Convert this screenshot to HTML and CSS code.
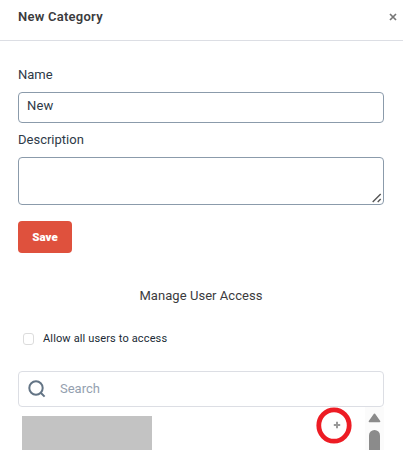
FILE: index.html
```html
<!DOCTYPE html>
<html lang="en">
<head>
<meta charset="utf-8">
<title>New Category</title>
<link rel="stylesheet" href="styles.css">
</head>
<body>
<header class="header">
  <h1 class="title"><span>New Category</span></h1>
  <svg class="close" width="8" height="8" viewBox="0 0 8 8"><path d="M1 1L7 7M7 1L1 7"/></svg>
</header>
<main class="content">
  <label class="label name-label" for="name">Name</label>
  <input class="field" id="name" type="text" value="New">
  <label class="label desc-label" for="desc">Description</label>
  <div class="area-wrap">
    <textarea class="area" id="desc"></textarea>
    <svg class="grip" width="10" height="10" viewBox="0 0 10 10"><path d="M.7 9L8.7 1M5.7 9L8.7 6"/></svg>
  </div>
  <button class="save">Save</button>
  <h2 class="subtitle">Manage User Access</h2>
  <label class="check"><input class="box" type="checkbox"><span>Allow all users to access</span></label>
  <div class="search">
    <svg width="18" height="18" viewBox="0 0 18 18"><circle cx="8" cy="8" r="6.7"/><path d="M12.7 12.7L16.6 16.6"/></svg>
    <span>Search</span>
  </div>
  <div class="list">
    <div class="user"></div>
    <div class="add">
      <svg class="plus" width="8" height="8" viewBox="0 0 8 8"><path d="M4 .8V7.2M.8 4H7.2"/></svg>
      <svg class="ring" width="36" height="38" viewBox="0 0 36 38"><ellipse cx="18" cy="18.5" rx="15.2" ry="15.7"/></svg>
    </div>
    <div class="track">
      <svg width="13" height="10" viewBox="0 0 13 10"><path d="M6.5 1.3L11.6 8.5H1.4Z"/></svg>
      <div class="thumb"></div>
    </div>
  </div>
</main>
</body>
</html>
```
FILE: styles.css
```css
* { box-sizing: border-box; }
body {
  margin: 0;
  height: 450px;
  overflow: hidden;
  background: #fff;
  color: #2e3a47;
  font: 13px/16px Roboto, "Liberation Sans", sans-serif;
}
.header {
  display: flex;
  justify-content: space-between;
  height: 41px;
  padding: 9px 6px 0 18px;
  border-bottom: 1px solid #dcdee4;
}
.title { margin: 0; font-size: 13px; line-height: 16px; font-weight: 600; letter-spacing: .25px; color: #3b3b3d; }
.close { margin-top: 4px; stroke: #777; stroke-width: 1.7; }
.content { padding: 0 19px 0 18px; }
.label { display: block; letter-spacing: 0; }
.name-label { padding-top: 26px; height: 51px; }
.field {
  display: block;
  width: 366px;
  height: 31px;
  padding: 0 8px 4px;
  border: 1px solid #8b9bab;
  border-radius: 4px;
  background: #fff;
  color: #2e3a47;
  font: inherit;
  letter-spacing: .2px;
}
.desc-label { padding-top: 9px; height: 34px; }
.area-wrap { position: relative; height: 48px; }
.area {
  display: block;
  width: 366px;
  height: 48px;
  border: 1px solid #8b9bab;
  border-radius: 4px;
  resize: none;
}
.grip { position: absolute; right: 2px; bottom: 2px; fill: none; stroke: #555; stroke-width: 1.4; }
.save {
  display: block;
  width: 54px;
  height: 32px;
  margin-top: 16px;
  padding: 0;
  border: 0;
  border-radius: 4px;
  background: #df513d;
  color: #fff;
  font: 900 11.5px/16px Roboto, sans-serif;
}
.subtitle { margin: 35px 0 0; font-size: 13px; line-height: 16px; font-weight: 400; text-align: center; color: #3b3b3d; letter-spacing: .05px; }
.check { display: flex; align-items: center; height: 16px; margin: 27px 0 0 5px; color: #202a35; font-size: 11px; font-weight: 450; letter-spacing: .14px; }
.box { appearance: none; width: 11px; height: 12px; margin: 0 9px 0 0; border: 1px solid #dcdcdc; border-radius: 3px; }
.search {
  display: flex;
  align-items: center;
  gap: 14px;
  height: 36px;
  margin-top: 24px;
  padding-left: 9px;
  border: 1px solid #dcdee4;
  border-radius: 4px;
  color: #94a0af;
}
.search svg { fill: none; stroke: #637485; stroke-width: 2; }
.list { display: flex; height: 43px; }
.user { width: 130px; height: 34px; margin: 9px 0 0 4px; background: #c3c3c3; }
.add { position: relative; width: 36px; margin-left: auto; }
.plus { display: block; margin: 13.5px 0 0 16.5px; stroke: #999; stroke-width: 2; }
.ring { position: absolute; left: 0; top: 0; fill: none; stroke: #ed1c24; stroke-width: 4.8; }
.track { width: 19px; height: 43px; margin-left: 13px; padding: 6px 0 0 3px; background: #fbfbfb; }
.track svg { display: block; fill: #8b8b8b; stroke: #8b8b8b; stroke-width: 1.5; stroke-linejoin: round; }
.thumb { width: 11px; height: 27px; margin: 7px 0 0 1px; border-radius: 6px 6px 0 0; background: #8b8b8b; }
```
